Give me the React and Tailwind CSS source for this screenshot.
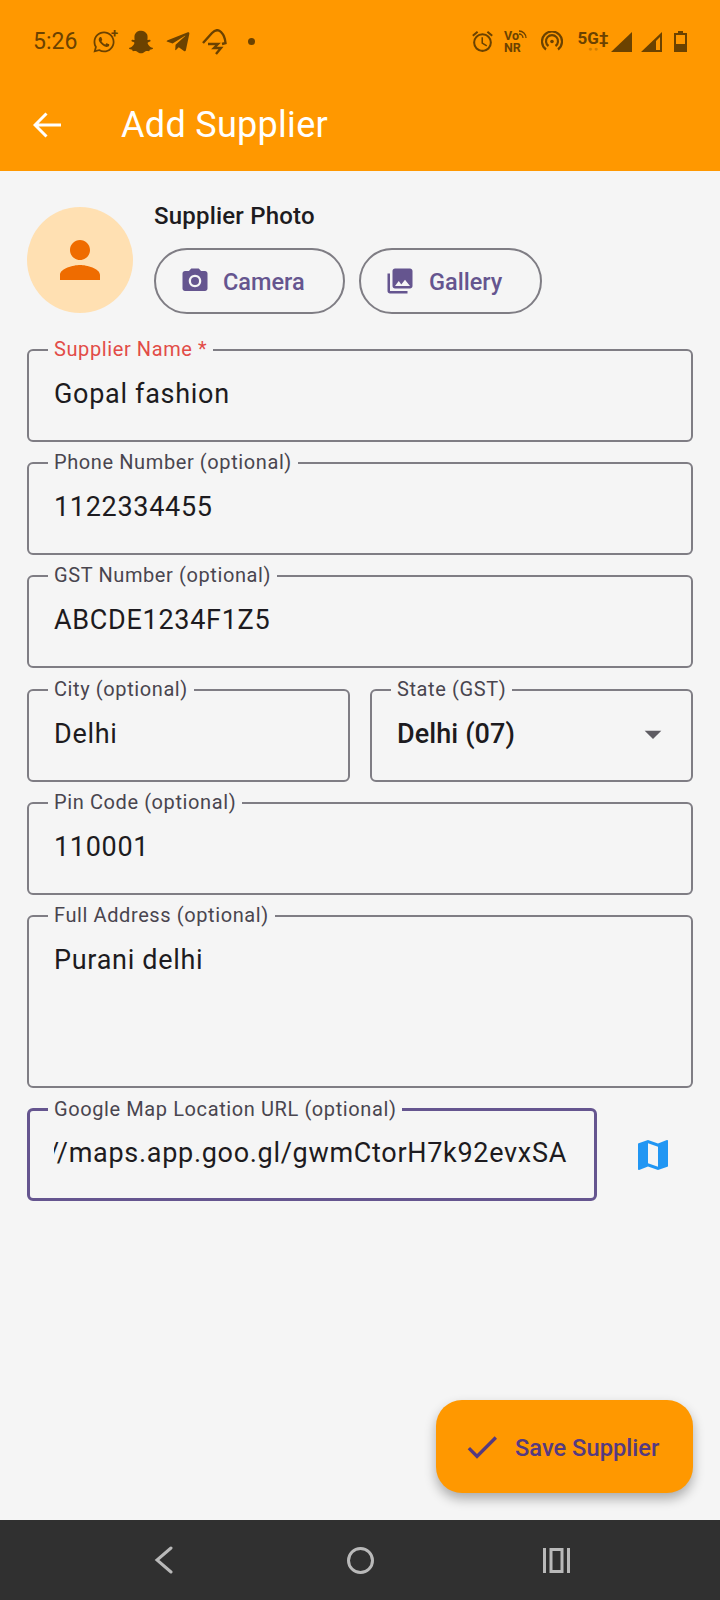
import { FaWhatsapp, FaSnapchatGhost, FaTelegramPlane } from 'react-icons/fa';
import {
    MdArrowDropDown,
    MdCameraAlt,
    MdCheck,
    MdMap,
    MdOutlineAlarm,
    MdPerson,
    MdPhotoLibrary,
} from 'react-icons/md';

const font = "font-['Roboto',sans-serif]";

const StatusBar = () => (
    <div className="flex h-[82px] items-center pl-[33px] pr-[33px] pt-[1px] text-[#6b4200]">
        <span className="w-[47px] text-[23px] leading-none">5:26</span>
        <div className="relative ml-[12px] h-[24px] w-[24px]">
            <FaWhatsapp size={24} />
            <span className="absolute -right-[2px] -top-[3px] text-[13px] font-bold leading-none">+</span>
        </div>
        <FaSnapchatGhost size={24} className="ml-[13px]" />
        <FaTelegramPlane size={26} className="ml-[12px]" />
        <svg width="25" height="26" viewBox="0 0 25 26" fill="none" stroke="currentColor" strokeWidth="2.4" className="ml-[11px]">
            <path d="M1 14 L10 4 Q15 -1 19 3 Q23 7 23.5 14 L20 15" />
            <path d="M6 15 H16 L12 19 H19 L14 25" />
        </svg>
        <span className="ml-[21px] h-[7px] w-[7px] rounded-full bg-[#6b4200]" />
        <div className="ml-auto flex items-center">
            <MdOutlineAlarm size={25} />
            <div className="ml-[9px] flex w-[24px] flex-col text-[12.5px] font-bold leading-[12px]">
                <div className="flex items-start">
                    <span>Vo</span>
                    <svg width="8" height="8" viewBox="0 0 8 8" fill="none" stroke="currentColor" strokeWidth="1.3">
                        <path d="M0 1 A7 7 0 0 1 7 8 M0 4 A4 4 0 0 1 4 8" />
                    </svg>
                </div>
                <span>NR</span>
            </div>
            <svg width="22" height="22" viewBox="0 0 22 22" fill="none" stroke="currentColor" strokeWidth="2.2" className="ml-[13px]">
                <path d="M5 18.5 A10 10 0 1 1 17 18.5" />
                <path d="M7.5 15 A6 6 0 1 1 14.5 15" />
                <circle cx="11" cy="10.5" r="1.8" fill="currentColor" stroke="none" />
            </svg>
            <div className="ml-[16px] flex w-[28px] flex-col items-center">
                <span className="text-[17px] font-bold leading-[16px]">5G‡</span>
                <span className="text-[7px] leading-[7px] opacity-30">● ●</span>
            </div>
            <svg width="21" height="20" viewBox="0 0 21 20" className="ml-[4px]">
                <path d="M0 20 L21 0 L21 20 Z" fill="currentColor" />
            </svg>
            <svg width="21" height="20" viewBox="0 0 21 20" className="ml-[9px]">
                <path d="M0 20 L21 0 L21 20 Z M15 18 L19 18 L19 5 L15 9 Z" fill="currentColor" fillRule="evenodd" />
            </svg>
            <svg width="13" height="21" viewBox="0 0 13 21" className="ml-[12px]">
                <path d="M4 0 H9 V2 H13 V21 H0 V2 H4 Z M2 4 V13 H11 V4 Z" fill="currentColor" fillRule="evenodd" />
            </svg>
        </div>
    </div>
);

const Header = () => (
    <header className="h-[171px] shrink-0 bg-[#ff9800]">
        <StatusBar />
        <div className="flex h-[85px] items-center pl-[33px]">
            <svg width="28" height="26" viewBox="0 0 28 26" fill="none" stroke="#fff" strokeWidth="3">
                <path d="M28 13 H3 M13.5 1.5 L2 13 L13.5 24.5" />
            </svg>
            <h1 className="ml-[60px] text-[36px] font-normal leading-none tracking-[0.3px] text-white">Add Supplier</h1>
        </div>
    </header>
);

const OutlineButton = ({ icon, label, className }) => (
    <button className={`flex h-[66px] items-center rounded-full border-2 border-[#7f7d84] pt-[3px] text-[23.5px] font-medium text-[#65558f] ${className}`}>
        <span className="-mt-[3px]">{icon}</span>
        {label}
    </button>
);

const Field = ({ label, value, labelClass = 'text-[#49454f]', className = 'h-[93px] border-2 border-[#7f7d84]', children }) => (
    <div className={`relative rounded-[6px] ${className}`}>
        <span className={`absolute -top-[13px] left-[19px] bg-[#f5f5f5] px-[6px] text-[20px] leading-[23px] tracking-[0.6px] ${labelClass}`}>
            {label}
        </span>
        {children || (
            <div className="pl-[25px] pt-[28px] text-[27px] leading-[30px] tracking-[0.7px] text-[#1d1b20]">{value}</div>
        )}
    </div>
);

const App = () => {
    return (
        <div className={`flex h-[1600px] w-[720px] flex-col overflow-hidden bg-[#f5f5f5] ${font}`}>
            <Header />
            <main className="relative flex-1 px-[27px] pt-[36px]">
                <div className="flex">
                    <div className="flex h-[106px] w-[106px] items-center justify-center rounded-full bg-[#ffe0b2]">
                        <MdPerson size={60} className="text-[#ef6c00]" />
                    </div>
                    <div className="ml-[21px]">
                        <div className="-mt-[5px] text-[24px] font-medium leading-[28px] tracking-[0.2px] text-[#1d1b20]">Supplier Photo</div>
                        <div className="mt-[18px] flex gap-[14px]">
                            <OutlineButton className="w-[191px] pl-[24px]" label="Camera" icon={<MdCameraAlt size={30} className="mr-[13px]" />} />
                            <OutlineButton className="w-[183px] pl-[24px]" label="Gallery" icon={<MdPhotoLibrary size={30} className="mr-[14px]" />} />
                        </div>
                    </div>
                </div>

                <div className="mt-[35px] flex flex-col gap-[20.2px]">
                    <Field label="Supplier Name *" value="Gopal fashion" labelClass="text-[#e24c47]" />
                    <Field label="Phone Number (optional)" value="1122334455" />
                    <Field label="GST Number (optional)" value="ABCDE1234F1Z5" />
                    <div className="grid grid-cols-2 gap-[20px]">
                        <Field label="City (optional)" value="Delhi" />
                        <Field label="State (GST)">
                            <div className="flex items-center justify-between pl-[25px] pr-[18px] pt-[28px] text-[27px] font-medium leading-[30px] tracking-[0.1px] text-[#1d1b20]">
                                Delhi (07)
                                <MdArrowDropDown size={40} className="-my-[5px] text-[#5f5d63]" />
                            </div>
                        </Field>
                    </div>
                    <Field label="Pin Code (optional)" value="110001" />
                    <Field label="Full Address (optional)" value="Purani delhi" className="h-[173px] border-2 border-[#7f7d84]" />
                    <div className="flex items-center">
                        <Field
                            label="Google Map Location URL (optional)"
                            labelClass="-ml-[1px] text-[#49454f]"
                            className="h-[93px] w-[570px] border-[3px] border-[#65558f]"
                        >
                            <div className="ml-[24px] mr-[27px] flex justify-end overflow-hidden whitespace-nowrap pt-[27px] text-[27px] leading-[30px] tracking-[0.7px] text-[#1d1b20]">
                                https://maps.app.goo.gl/gwmCtorH7k92evxSA
                            </div>
                        </Field>
                        <MdMap size={40} className="ml-[36px] text-[#2196f3]" />
                    </div>
                </div>

                <button className="absolute bottom-[27px] right-[27px] flex h-[93px] w-[257px] items-center rounded-[26px] bg-[#ff9800] pl-[26px] text-[23.7px] font-medium text-[#553a80] shadow-[0_6px_12px_rgba(0,0,0,0.3)]">
                    <MdCheck size={40} className="mr-[13px]" />
                    <span className="pt-[4px]">Save Supplier</span>
                </button>
            </main>
            <nav className="flex h-[80px] shrink-0 items-center bg-[#303030] text-[#b9b9b9]">
                <svg width="20" height="28" viewBox="0 0 20 28" fill="none" stroke="currentColor" strokeWidth="3" strokeLinecap="round" className="ml-[154px]">
                    <path d="M17 2 L3 14 L17 26" />
                </svg>
                <span className="ml-[173px] h-[27px] w-[27px] rounded-full border-[3px] border-current" />
                <svg width="27" height="25" viewBox="0 0 27 25" fill="currentColor" className="ml-[169px]">
                    <path d="M0 0 H3 V25 H0 Z M24 0 H27 V25 H24 Z M6.5 0 H20.5 V25 H6.5 Z M9.5 3 V22 H17.5 V3 Z" fillRule="evenodd" />
                </svg>
            </nav>
        </div>
    );
};

export default App;
